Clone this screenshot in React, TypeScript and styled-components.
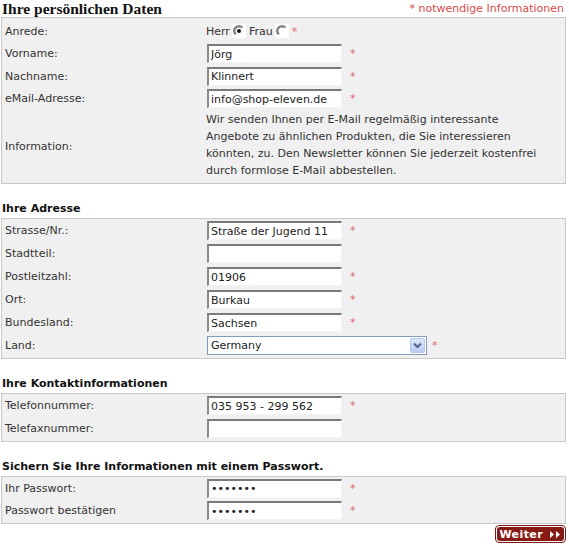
import React from "react";
import styled, { createGlobalStyle } from "styled-components";

const Global = createGlobalStyle`
  html, body { margin: 0; padding: 0; background: #ffffff; }
  body { font-family: "DejaVu Sans", Verdana, sans-serif; font-size: 11px; color: #333; }
`;

const Page = styled.div`
  width: 565px;
  padding: 0 3px 0 1px;
`;

const TitleBar = styled.div`
  display: flex;
  justify-content: space-between;
  align-items: center;
  height: 17px;
`;

const Title = styled.h1`
  margin: 0 0 0 1px;
  font-family: "Liberation Serif", "Times New Roman", serif;
  font-weight: bold;
  font-size: 15.5px;
  line-height: 17px;
  color: #111;
`;

const Required = styled.span`
  color: #d94a4a;
  font-size: 11px;
  padding-right: 2px;
`;

const SectionTitle = styled.h2`
  margin: 18px 0 2px 1px;
  font-size: 11px;
  font-weight: bold;
  line-height: 14px;
  height: 14px;
  color: #111;
`;

const Box = styled.div<{ $pt: number }>`
  background: #f0f0f0;
  border: 1px solid #c9c9c9;
  padding: ${(p) => p.$pt}px 0 1px 0;
`;

const Row = styled.div<{ $h: number }>`
  display: grid;
  grid-template-columns: 204px 1fr;
  align-items: center;
  min-height: ${(p) => p.$h}px;
`;

const Label = styled.div`
  padding-left: 3px;
  color: #333;
`;

const Value = styled.div`
  display: flex;
  align-items: center;
`;

const TextInput = styled.input`
  box-sizing: border-box;
  width: 135px;
  height: 19px;
  margin: 0 0 0 1px;
  padding: 0 0 0 2px;
  font-family: "DejaVu Sans", Verdana, sans-serif;
  font-size: 11px;
  color: #222;
  background: #fff;
  border-style: solid;
  border-width: 2px 1px 1px 2px;
  border-color: #7a7a7a #f4f4f4 #f4f4f4 #8a8a8a;
  outline: none;
`;

const Star = styled.span`
  color: #e06a6a;
  margin-left: 8px;
  font-size: 11px;
`;

const Info = styled.div`
  line-height: 17px;
  padding: 1px 0 3px 0;
  color: #333;
`;

const RadioText = styled.span`
  color: #333;
  margin-right: 2px;
`;

const RadioBox = styled.span`
  display: inline-flex;
  width: 14px;
  height: 14px;
  background: #fff;
  margin-right: 3px;
`;

const SelectWrap = styled.div`
  position: relative;
  width: 220px;
  height: 19px;
  margin-left: 1px;
`;

const Select = styled.select`
  box-sizing: border-box;
  appearance: none;
  width: 100%;
  height: 100%;
  padding: 0 0 0 3px;
  font-family: "DejaVu Sans", Verdana, sans-serif;
  font-size: 11px;
  color: #222;
  background: #fff;
  border: 1px solid #7f9db9;
  border-radius: 0;
  outline: none;
`;

const DropButton = styled.span`
  position: absolute;
  top: 2px;
  right: 2px;
  width: 15px;
  height: 15px;
  box-sizing: border-box;
  border: 1px solid #b5c8ec;
  border-radius: 2px;
  background: linear-gradient(#dbe6fb, #b8cdf5);
  display: flex;
  align-items: center;
  justify-content: center;
  pointer-events: none;
`;

const Footer = styled.div`
  display: flex;
  justify-content: flex-end;
  padding-top: 1px;
`;

const WeiterButton = styled.button`
  display: inline-flex;
  padding: 1px;
  border: 1px solid #7b1a14;
  border-radius: 4px;
  background: #fff;
  cursor: pointer;
`;

const WeiterInner = styled.span`
  display: inline-flex;
  align-items: center;
  gap: 7px;
  height: 14px;
  padding: 0 3px 0 2px;
  border-radius: 3px;
  background: #861b15;
  color: #fff;
  font-family: "DejaVu Sans", Verdana, sans-serif;
  font-weight: bold;
  font-size: 11px;
  letter-spacing: 0.4px;
`;

const Radio = ({ checked }: { checked?: boolean }) => (
  <RadioBox>
    <svg width="14" height="14" viewBox="0 0 14 14">
      <path d="M3.2 10.8 A5 5 0 0 1 10.8 3.2" fill="none" stroke="#808080" strokeWidth="1.3" />
      <path d="M4.3 10.2 A4 4 0 0 1 9.7 3.8" fill="none" stroke="#404040" strokeWidth="1" />
      {checked && <circle cx="7" cy="7" r="2" fill="#111" />}
    </svg>
  </RadioBox>
);

type Field = { label: string; value?: string; type?: string };

const FieldRow = ({ label, value, type, h }: Field & { h: number }) => (
  <Row $h={h}>
    <Label>{label}</Label>
    <Value>
      <TextInput type={type || "text"} defaultValue={value || ""} />
      {value ? <Star>*</Star> : null}
    </Value>
  </Row>
);

const address: Field[] = [
  { label: "Strasse/Nr.:", value: "Straße der Jugend 11" },
  { label: "Stadtteil:", value: "" },
  { label: "Postleitzahl:", value: "01906" },
  { label: "Ort:", value: "Burkau" },
  { label: "Bundesland:", value: "Sachsen" },
];

export default function App() {
  return (
    <Page>
      <Global />
      <TitleBar>
        <Title>Ihre persönlichen Daten</Title>
        <Required>* notwendige Informationen</Required>
      </TitleBar>
      <Box $pt={2}>
        <Row $h={22.5}>
          <Label>Anrede:</Label>
          <Value>
            <RadioText>Herr</RadioText>
            <Radio checked />
            <RadioText>Frau</RadioText>
            <Radio />
            <Star style={{ marginLeft: 0 }}>*</Star>
          </Value>
        </Row>
        <FieldRow h={22.5} label="Vorname:" value="Jörg" />
        <FieldRow h={22.5} label="Nachname:" value="Klinnert" />
        <FieldRow h={22.5} label="eMail-Adresse:" value="info@shop-eleven.de" />
        <Row $h={22.5}>
          <Label>Information:</Label>
          <Info>
            Wir senden Ihnen per E-Mail regelmäßig interessante
            <br />
            Angebote zu ähnlichen Produkten, die Sie interessieren
            <br />
            könnten, zu. Den Newsletter können Sie jederzeit kostenfrei
            <br />
            durch formlose E-Mail abbestellen.
          </Info>
        </Row>
      </Box>

      <SectionTitle>Ihre Adresse</SectionTitle>
      <Box $pt={0}>
        {address.map((f) => (
          <FieldRow key={f.label} h={23} {...f} />
        ))}
        <Row $h={23}>
          <Label>Land:</Label>
          <Value>
            <SelectWrap>
              <Select defaultValue="Germany">
                <option>Germany</option>
              </Select>
              <DropButton>
                <svg width="9" height="7" viewBox="0 0 9 7">
                  <path d="M1 1.5 L4.5 5 L8 1.5" fill="none" stroke="#4d6185" strokeWidth="2" />
                </svg>
              </DropButton>
            </SelectWrap>
            <Star style={{ marginLeft: 5 }}>*</Star>
          </Value>
        </Row>
      </Box>

      <SectionTitle>Ihre Kontaktinformationen</SectionTitle>
      <Box $pt={0}>
        <FieldRow h={23} label="Telefonnummer:" value="035 953 - 299 562" />
        <FieldRow h={23} label="Telefaxnummer:" value="" />
      </Box>

      <SectionTitle>Sichern Sie Ihre Informationen mit einem Passwort.</SectionTitle>
      <Box $pt={0}>
        <FieldRow h={22.5} label="Ihr Passwort:" value="geheim1" type="password" />
        <FieldRow h={22.5} label="Passwort bestätigen" value="geheim1" type="password" />
      </Box>

      <Footer>
        <WeiterButton type="button">
          <WeiterInner>
            Weiter
            <svg width="11" height="7" viewBox="0 0 11 7">
              <path d="M0 0 L4 3.5 L0 7 Z M6 0 L10 3.5 L6 7 Z" fill="#fff" />
            </svg>
          </WeiterInner>
        </WeiterButton>
      </Footer>
    </Page>
  );
}
